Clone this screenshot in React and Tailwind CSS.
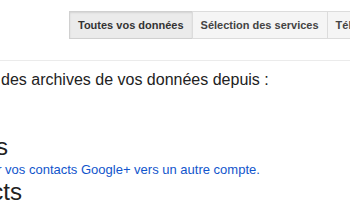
import React from "react";

const font = { fontFamily: '"Liberation Sans", Arial, sans-serif' };

export default function App() {
  return (
    <div className="h-[215px] w-[350px] overflow-hidden bg-white text-[#222]" style={font}>
      {/* Tabs */}
      <div className="flex pl-[69px] pt-[11px] whitespace-nowrap">
        <Tab label="Toutes vos données" active />
        <Tab label="Sélection des services" />
        <Tab label="Télécharger" />
      </div>

      <div className="mt-[21px] h-px w-full bg-[#ebebeb]" />

      <p className="mt-[10px] pl-px whitespace-nowrap text-[16px] leading-[18px]">
        des archives de vos données depuis :
      </p>

      {/* Sections */}
      <div className="mt-[44px]">
        <Clipped width="w-[8px]" className="text-[24px] leading-[28px]">
          Cercles
        </Clipped>
        <div className="mt-[1px] flex whitespace-nowrap text-[13px] leading-[16px] text-[#1155cc]">
          <span className="flex w-[1.5px] justify-end overflow-hidden">Transférer</span>
          <span>&nbsp;vos contacts Google+ vers un autre compte.</span>
        </div>
        <Clipped width="w-[22px]" className="text-[24px] leading-[28px]">
          Contacts
        </Clipped>
      </div>
    </div>
  );
}

function Tab({ label, active }) {
  return (
    <div
      className={
        active
          ? "h-[28px] border border-[#d0d0d0] bg-[#ebebeb] px-[8px] text-[11px] leading-[26px] font-bold text-[#333] shadow-[inset_0_1px_2px_rgba(0,0,0,0.1)]"
          : "-ml-px h-[28px] border border-[#dcdcdc] bg-[#f5f5f5] px-[8px] text-[11px] leading-[26px] font-bold text-[#444]"
      }
    >
      {label}
    </div>
  );
}

function Clipped({ width, className, children }) {
  return (
    <div className={`flex ${width} justify-end overflow-hidden whitespace-nowrap ${className}`}>
      {children}
    </div>
  );
}
